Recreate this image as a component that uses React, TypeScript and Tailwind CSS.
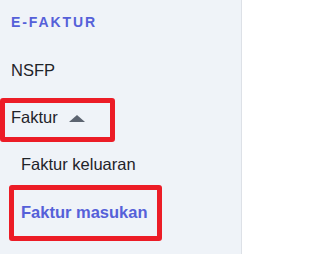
const App = () => {
  return (
    <div className="h-[254px] w-[243px] bg-white">
      <nav
        className="h-full w-[242px] border-r border-[#dde1e7] bg-[#eff3f8] text-[#1f2329]"
        style={{ fontFamily: '"Liberation Sans", Arial, sans-serif' }}
      >
        <div className="pl-[11px] pt-[14px] text-[14px] font-bold leading-4 tracking-[1.9px] text-[#5560d9]">
          E-FAKTUR
        </div>

        <div className="mt-[28px] pl-[11px] text-[16.5px] leading-6">NSFP</div>

        <div className="mt-[16px] flex w-[115px] items-center rounded-[3px] border-[5px] border-[#ec1c26] pb-[8px] pl-[6px] pt-[2px]">
          <span className="text-[16.5px] leading-6">Faktur</span>
          <svg className="ml-[11px] mt-[3px]" width="16" height="7" viewBox="0 0 16 7">
            <path d="M8 0 L16 7 L0 7 Z" fill="#5c6470" />
          </svg>
        </div>

        <div className="mt-[10px] pl-[21px] text-[16.5px] leading-6">Faktur keluaran</div>

        <div className="ml-[9px] mt-[9px] w-[153px] rounded-[3px] border-[5px] border-[#ec1c26] pb-[11px] pl-[7px] pt-[10px]">
          <span className="text-[16.5px] font-bold leading-6 text-[#5560d9]">Faktur masukan</span>
        </div>
      </nav>
    </div>
  );
};

export default App;
